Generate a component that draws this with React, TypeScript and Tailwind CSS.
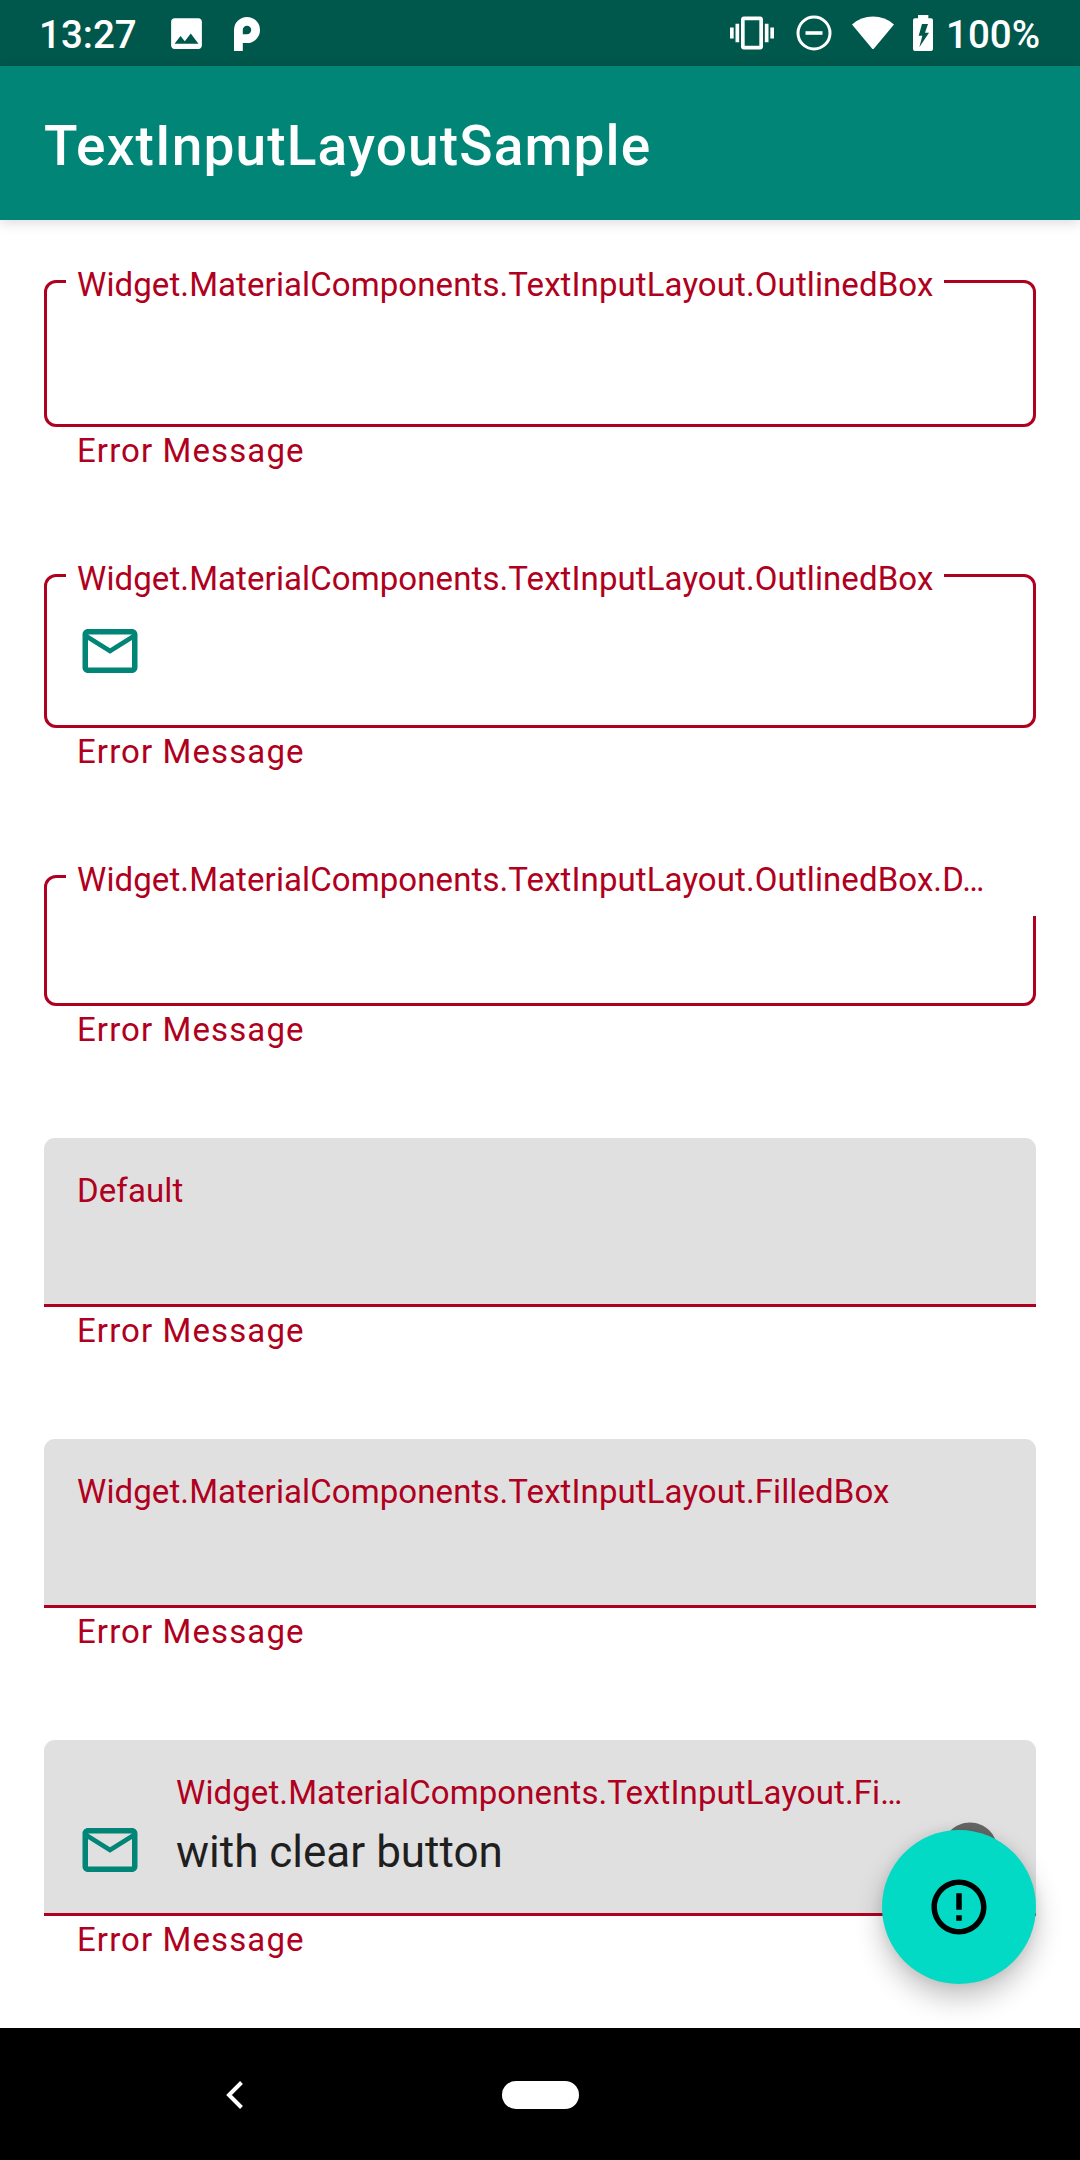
import React from "react";
import type { ReactNode } from "react";

const DEFAULT_PREFIX = "Widget.MaterialComponents.TextInputLayout.";

function MailIcon() {
  return (
    <svg viewBox="0 0 24 24" className="size-[66px] shrink-0 fill-[#008577]">
      <path d="M22 6c0-1.1-.9-2-2-2H4c-1.1 0-2 .9-2 2v12c0 1.1.9 2 2 2h16c1.1 0 2-.9 2-2V6zm-2 0l-8 5-8-5h16zm0 12H4V8l8 5 8-5v10z" />
    </svg>
  );
}

function StatusBar() {
  return (
    <div className="flex h-[66px] shrink-0 items-center bg-[#00574b] pl-[39px] pr-[54px] text-[38.5px] font-medium leading-[66px] text-white">
      <span className="w-[125px] pt-[3px]">13:27</span>
      <svg viewBox="0 0 24 24" className="ml-[2px] size-[41px] fill-white">
        <path d="M21 19V5c0-1.1-.9-2-2-2H5c-1.1 0-2 .9-2 2v14c0 1.1.9 2 2 2h14c1.1 0 2-.9 2-2zM8.5 13.5l2.5 3.01L14.5 12l4.500 6H5l3.500-4.500z" />
      </svg>
      <svg viewBox="0 0 26 34" className="ml-[27px] mt-[2px] h-[34px] w-[26px]">
        <path
          d="M4.400 34V13A8.600 8.600 0 1 1 13 21.600H4.400"
          fill="none"
          stroke="white"
          strokeWidth="8.800"
        />
      </svg>
      <div className="ml-auto flex items-center">
        <svg viewBox="0 0 24 24" className="size-[44px] fill-white">
          <path d="M0 15h2V9H0v6zm3 2h2V7H3v10zm19-8v6h2V9h-2zm-3 8h2V7h-2v10zM16.500 3h-9C6.670 3 6 3.670 6 4.500v15c0 .83.67 1.500 1.500 1.500h9c.83 0 1.500-.67 1.500-1.500v-15c0-.83-.67-1.500-1.500-1.500zM16 19H8V5h8v14z" />
        </svg>
        <svg viewBox="0 0 36 36" className="ml-[21.500px] size-[36px]" fill="none" stroke="white">
          <circle cx="18" cy="18" r="16" strokeWidth="3" />
          <path d="M9.500 18h17" strokeWidth="3.600" />
        </svg>
        <svg viewBox="0 0 42 34" className="ml-[20px] h-[34px] w-[42px] fill-white">
          <path d="M0 8.400Q9 .5 21 .5T42 8.400L22 32.400Q21 33.400 20 32.400Z" />
        </svg>
        <svg viewBox="0 0 60 108" className="ml-[19.500px] h-[36px] w-[20px] fill-white">
          <path
            fillRule="evenodd"
            d="M15 0h31v10h8q6 0 6 6v86q0 6-6 6H6q-6 0-6-6V16q0-6 6-6h9zM27 27L17 62h11l-9 35 29-44H36l9-26z"
          />
        </svg>
        <span className="w-[93px] pl-[13px] pt-[3px]">100%</span>
      </div>
    </div>
  );
}

function ErrorText() {
  return (
    <p className="mt-[5px] pl-[33px] text-[33px] leading-[38px] tracking-[1.1px]">Error Message</p>
  );
}

function OutlinedField({
  label,
  boxClass,
  labelClass,
  children,
}: {
  label: string;
  boxClass: string;
  labelClass: string;
  children?: ReactNode;
}) {
  return (
    <div className="pt-[15px]">
      <div className={`relative rounded-[12px] border-[3px] border-[#b00020] ${boxClass}`}>
        <span
          className={`absolute -top-[17px] left-[19px] whitespace-nowrap bg-white pl-[11px] text-[33px] leading-[38px] tracking-[0.1px] ${labelClass}`}
        >
          {label}
        </span>
        {children}
      </div>
      <ErrorText />
    </div>
  );
}

function FilledField({
  label,
  boxClass,
  children,
}: {
  label: string;
  boxClass: string;
  children?: ReactNode;
}) {
  return (
    <div>
      <div
        className={`rounded-t-[11px] bg-[#e0e0e0] bg-linear-to-t from-[#b00020] from-[3px] to-[#e0e0e0] to-[3px] pt-[34px] ${boxClass}`}
      >
        <div className="whitespace-nowrap text-[33px] leading-[38px] tracking-[0.1px]">{label}</div>
        {children}
      </div>
      <ErrorText />
    </div>
  );
}

export default function App() {
  return (
    <div className="relative flex h-[2160px] w-[1080px] flex-col overflow-hidden bg-white font-['Roboto',sans-serif]">
      <StatusBar />
      <header className="flex h-[154px] shrink-0 items-center bg-[#008577] pl-[44px] pt-[7px] text-[55px] font-medium tracking-[1.15px] text-white shadow-[0_3px_12px_rgba(0,0,0,0.140)]">
        <h1>TextInputLayoutSample</h1>
      </header>

      <main className="flex flex-1 flex-col gap-[89px] px-[44px] pt-[45px] text-[#b00020]">
        <OutlinedField
          label={DEFAULT_PREFIX + "OutlinedBox"}
          boxClass="h-[147px]"
          labelClass="w-[878px]"
        />
        <OutlinedField
          label={DEFAULT_PREFIX + "OutlinedBox"}
          boxClass="h-[154px] pl-[30px] pt-[41px]"
          labelClass="w-[878px]"
        >
          <MailIcon />
        </OutlinedField>
        <OutlinedField
          label={DEFAULT_PREFIX + "OutlinedBox.D…"}
          boxClass="h-[131px]"
          labelClass="h-[55px] w-[974px]"
        />
        <FilledField label="Default" boxClass="h-[169px] pl-[33px]" />
        <FilledField label={DEFAULT_PREFIX + "FilledBox"} boxClass="h-[169px] pl-[33px]" />
        <FilledField label={DEFAULT_PREFIX + "Fi…"} boxClass="h-[176px] pl-[132px]">
          <div className="-ml-[99px] flex items-center pt-[5px]">
            <MailIcon />
            <span className="ml-[33px] pt-[3px] text-[44px] leading-[52px] text-[#1f1f1f]">
              with clear button
            </span>
            <svg viewBox="0 0 24 24" className="ml-auto mr-[33px] size-[66px] fill-[#666666]">
              <path d="M12 2C6.470 2 2 6.470 2 12s4.470 10 10 10 10-4.470 10-10S17.530 2 12 2zm5 13.590L15.590 17 12 13.410 8.410 17 7 15.590 10.590 12 7 8.410 8.410 7 12 10.590 15.590 7 17 8.410 13.410 12 17 15.590z" />
            </svg>
          </div>
        </FilledField>
      </main>

      <button className="absolute bottom-[176px] right-[44px] flex size-[154px] items-center justify-center rounded-full bg-[#03dac6] shadow-[0_14px_28px_rgba(0,0,0,0.240),0_0_12px_rgba(0,0,0,0.080)]">
        <svg viewBox="0 0 24 24" className="size-[66px] fill-black">
          <path d="M11 15h2v2h-2zm0-8h2v6h-2zm.99-5C6.470 2 2 6.480 2 12s4.470 10 9.990 10C17.520 22 22 17.520 22 12S17.520 2 11.990 2zM12 20c-4.420 0-8-3.580-8-8s3.580-8 8-8 8 3.580 8 8-3.580 8-8 8z" />
        </svg>
      </button>

      <nav className="relative z-10 grid h-[132px] shrink-0 grid-cols-[470px_140px_470px] items-center bg-black pt-px">
        <svg
          viewBox="0 0 17 28"
          className="ml-[226px] h-[28px] w-[17px]"
          fill="none"
          stroke="white"
          strokeWidth="4"
        >
          <path d="M15.500 1.500L3 14l12.500 12.500" />
        </svg>
        <div className="mx-auto h-[28px] w-[77px] rounded-full bg-white" />
      </nav>
    </div>
  );
}
